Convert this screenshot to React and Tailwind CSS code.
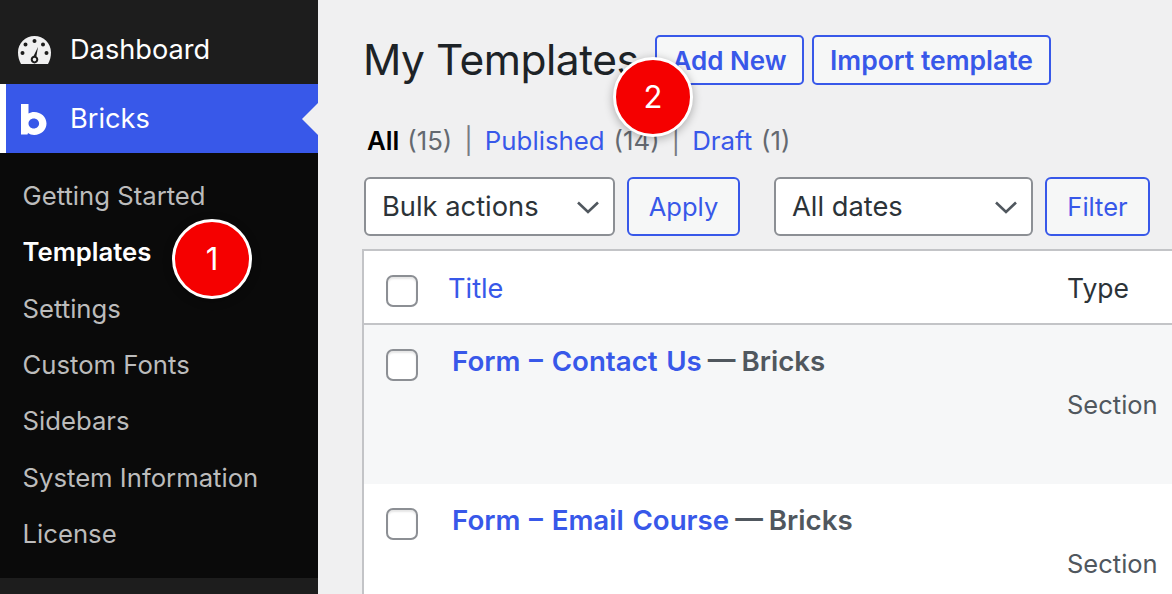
import React from "react";

const Chevron = () => (
  <svg width="24" height="24" viewBox="0 0 24 24" fill="none" stroke="#50575e" strokeWidth="2.6" className="shrink-0">
    <path d="M2 7.5 L12 17 L22 7.5" />
  </svg>
);

const Check = () => (
  <span className="block w-8 h-8 shrink-0 rounded-[7px] border-2 border-[#8c8f94] bg-white shadow-[inset_0_2px_2px_rgba(0,0,0,0.1)]" />
);

const Badge = ({ n, className }) => (
  <div className={"absolute w-[80px] h-[80px] rounded-full bg-[#f50000] border-[3px] border-white flex items-center justify-center text-white text-[31px] shadow-[0_2px_10px_rgba(0,0,0,0.3)] " + className}>
    {n}
  </div>
);

const subs = ["Getting Started", "Templates", "Settings", "Custom Fonts", "Sidebars", "System Information", "License"];

const Row = ({ title, bg, height }) => (
  <div className={"flex items-start shrink-0 " + bg + " " + height}>
    <div className="w-[54px] shrink-0 pl-[22px] pt-[24px]"><Check /></div>
    <div className="pl-[34px] pt-[18px] w-[649px] shrink-0 text-[27.700px] leading-[36px] font-semibold whitespace-nowrap">
      <span className="text-[#3858e9] [word-spacing:1.7px]">{title}</span>
      <span className="text-[#50575e] [word-spacing:-1px]"> — Bricks</span>
    </div>
    <div className="pt-[62px] text-[25.500px] leading-[36px] text-[#50575e]">Section</div>
  </div>
);

export default function App() {
  return (
    <div className="relative w-[1172px] h-[594px] overflow-hidden flex bg-[#f0f0f1] font-['Inter',sans-serif]">
      <aside className="w-[318px] shrink-0 h-full bg-[#1d1d1d] flex flex-col">
        <div className="h-[84px] shrink-0 flex items-center pt-[16px]">
          <div className="w-[70px] shrink-0 pl-[18px]">
            <svg width="33" height="28" viewBox="0 0 33 28">
              <path fill="#f0f0f1" fillRule="evenodd" d="M16.5 0C7.4 0 0 7.3 0 16.4c0 4 1 8 3 11.6h27c2-3.6 3-7.6 3-11.6C33 7.3 25.6 0 16.5 0zM16.5 3a2 2 0 1 1 0 4 2 2 0 0 1 0-4zM7.5 6.5a2 2 0 1 1 0 4 2 2 0 0 1 0-4zM25 6.5a2 2 0 1 1 0 4 2 2 0 0 1 0-4zM4.500 15a2 2 0 1 1 0 4 2 2 0 0 1 0-4zM28.500 15a2 2 0 1 1 0 4 2 2 0 0 1 0-4zM20 11l-1.600 9.200c1.200.8 1.900 2 1.900 3.400 0 2.200-1.700 3.900-3.800 3.900s-3.800-1.700-3.800-3.900c0-1.900 1.300-3.400 3-3.800L20 11zM16.500 21.800a1.800 1.800 0 1 0 0 3.600 1.800 1.800 0 0 0 0-3.600z" />
            </svg>
          </div>
          <span className="text-white text-[27.200px] leading-[34px]">Dashboard</span>
        </div>
        <div className="relative h-[69px] shrink-0 bg-[#3858e9] border-l-[6px] border-white flex items-center">
          <div className="w-[64px] shrink-0 pl-[15px] pt-[2px]">
            <svg width="26" height="31" viewBox="0 0 26 31">
              <path fill="#fff" fillRule="evenodd" d="M0 0h7.500v9.600C9 8.600 11 8 13.200 8 20 8 25.500 13 25.500 19.500S20 31 13.200 31C10.800 31 8.600 30.200 7 29L6.500 30.500H0V0zM12.800 14.500c-3 0-5.300 2.200-5.300 5s2.300 5 5.300 5 5.300-2.200 5.300-5-2.300-5-5.300-5z" />
            </svg>
          </div>
          <span className="text-white text-[27.200px] leading-[34px]">Bricks</span>
          <div className="absolute right-0 top-[19px] w-0 h-0 border-y-[16px] border-y-transparent border-r-[16px] border-r-[#f0f0f1]" />
        </div>
        <nav className="h-[425px] shrink-0 bg-[#0a0a0a] pl-[22.500px] pt-[15px] flex flex-col">
          {subs.map((s) => (
            <div key={s} className={"h-[56.400px] shrink-0 flex items-center text-[25.700px] whitespace-nowrap " + (s === "Templates" ? "text-white font-semibold" : "text-[#bcbcbc]")}>
              {s}
            </div>
          ))}
        </nav>
      </aside>

      <main className="flex-1 min-w-0 pl-[45px] flex flex-col">
        <div className="flex items-start shrink-0 pt-[35px] h-[85px]">
          <h1 className="w-[292px] shrink-0 text-[42.500px] leading-[50px] tracking-[-0.5px] text-[#1d2327] whitespace-nowrap">My Templates</h1>
          <div className="h-[50px] w-[149px] shrink-0 rounded-[5px] border-2 border-[#3858e9] bg-[#f6f7f7] flex items-center justify-center text-[26px] font-semibold text-[#3858e9]">Add New</div>
          <div className="ml-[8px] h-[50px] w-[239px] shrink-0 rounded-[5px] border-2 border-[#3858e9] bg-[#f6f7f7] flex items-center justify-center pt-[1px] text-[26.500px] font-semibold text-[#3858e9] whitespace-nowrap">Import template</div>
        </div>
        <div className="h-[92px] shrink-0 flex items-start pt-[38px] pl-[4px] text-[25.800px] leading-[36px] whitespace-nowrap text-[#646970]">
          <span className="font-semibold text-black">All</span>
          <span className="ml-[8px]">(15)</span>
          <span className="ml-[12px] text-[#787c82]">|</span>
          <span className="ml-[12px] text-[#3858e9]">Published</span>
          <span className="ml-[9px]">(14)</span>
          <span className="ml-[12px] text-[#787c82]">|</span>
          <span className="ml-[12px] text-[#3858e9]">Draft</span>
          <span className="ml-[9px]">(1)</span>
        </div>
        <div className="flex items-start shrink-0 h-[73px] text-[27.300px]">
          <div className="ml-[1px] w-[251px] h-[59px] shrink-0 rounded-[6px] border-2 border-[#8c8f94] bg-white flex items-center justify-between pl-[16px] pr-[13px] text-[#2c3338]">
            <span className="pt-[2px]">Bulk actions</span><Chevron />
          </div>
          <div className="ml-[12px] w-[113px] h-[59px] shrink-0 rounded-[6px] border-2 border-[#3858e9] bg-[#f6f7f7] flex items-center justify-center text-[25.500px] pt-[2px] text-[#3858e9]">Apply</div>
          <div className="ml-[34px] w-[259px] h-[59px] shrink-0 rounded-[6px] border-2 border-[#8c8f94] bg-white flex items-center justify-between pl-[16px] pr-[13px] text-[#2c3338]">
            <span className="pt-[2px]">All dates</span><Chevron />
          </div>
          <div className="ml-[12px] w-[105px] h-[59px] shrink-0 rounded-[6px] border-2 border-[#3858e9] bg-[#f6f7f7] flex items-center justify-center text-[25.500px] pt-[2px] text-[#3858e9]">Filter</div>
        </div>
        <div className="flex-1 min-h-0 -ml-[1px] -mt-[1px] border-l-2 border-t-2 border-[#c3c4c7] bg-white flex flex-col">
          <div className="h-[74px] shrink-0 flex items-start border-b-2 border-[#c3c4c7]">
            <div className="w-[54px] shrink-0 pl-[22px] pt-[24px]"><Check /></div>
            <div className="pl-[30px] pt-[20px] w-[649px] shrink-0 text-[27.200px] leading-[36px] text-[#3858e9]">Title</div>
            <div className="pt-[19px] text-[26.500px] leading-[36px] text-[#2c3338]">Type</div>
          </div>
          <Row title="Form – Contact Us" bg="bg-[#f6f7f8]" height="h-[159px]" />
          <Row title="Form – Email Course" bg="bg-white" height="h-[159px]" />
        </div>
      </main>

      <Badge n="1" className="left-[172px] top-[219px]" />
      <Badge n="2" className="left-[613px] top-[57px]" />
    </div>
  );
}
